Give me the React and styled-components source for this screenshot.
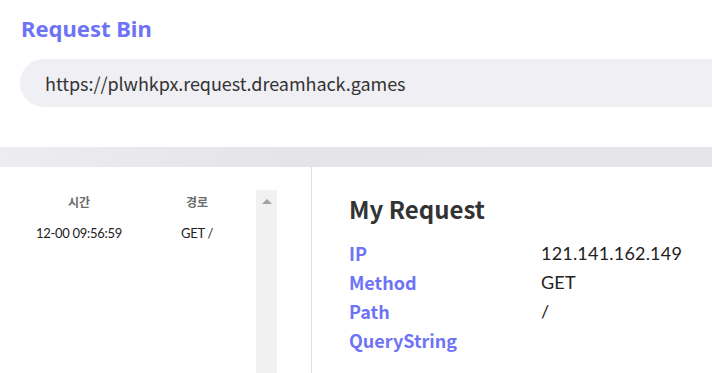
import styled, { createGlobalStyle } from 'styled-components'

const GlobalStyle = createGlobalStyle`
	html, body {
		margin: 0;
		padding: 0;
		background: #fff;
		overflow: hidden;
	}
	body {
		font-family: 'Noto Sans CJK KR', 'Noto Sans', sans-serif;
		color: #333;
	}
`

const requests = [{ time: '12-00 09:56:59', path: 'GET /' }]

const detail = [
	{ label: 'IP', value: '121.141.162.149' },
	{ label: 'Method', value: 'GET' },
	{ label: 'Path', value: '/' },
	{ label: 'QueryString', value: '' },
]

function App() {
	return (
		<>
			<GlobalStyle />
			<Header>
				<Title>Request Bin</Title>
				<UrlBox>https://plwhkpx.request.dreamhack.games</UrlBox>
			</Header>
			<Divider />
			<Main>
				<ListPanel>
					<Table>
						<HeadRow>
							<HeadCell>시간</HeadCell>
							<HeadCell>경로</HeadCell>
						</HeadRow>
						{requests.map((r, i) => (
							<Row key={i}>
								<Cell>{r.time}</Cell>
								<Cell>{r.path}</Cell>
							</Row>
						))}
					</Table>
					<ScrollTrack>
						<ScrollArrow />
					</ScrollTrack>
				</ListPanel>
				<DetailPanel>
					<DetailTitle>My Request</DetailTitle>
					<DetailGrid>
						{detail.map((d) => (
							<DetailRow key={d.label}>
								<Label>{d.label}</Label>
								<Value>{d.value}</Value>
							</DetailRow>
						))}
					</DetailGrid>
				</DetailPanel>
			</Main>
		</>
	)
}

export default App

const Header = styled.div`
	padding: 12px 0 40px 20px;
`
const Title = styled.h1`
	margin: 0 0 0 1px;
	font-family: 'Noto Sans', sans-serif;
	font-size: 22px;
	line-height: 32px;
	font-weight: 700;
	color: #6e73f6;
`
const UrlBox = styled.div`
	margin-top: 15px;
	height: 48px;
	display: flex;
	align-items: center;
	padding-left: 25px;
	border-radius: 24px 0 0 24px;
	background: #efeff4;
	font-size: 18px;
	letter-spacing: -0.05px;
	color: #333;
`
const Divider = styled.div`
	height: 20px;
	background: linear-gradient(to right, #ededf1, #e4e4e9 40%, #e6e6ea);
`
const Main = styled.div`
	display: flex;
	height: 206px;
`
const ListPanel = styled.div`
	width: 312px;
	border-right: 1px solid #dddde3;
	display: flex;
	align-items: flex-start;
	padding: 23px 0 0 20px;
	box-sizing: border-box;
`
const Table = styled.div`
	width: 236px;
	font-family: Lato, 'Noto Sans CJK KR', sans-serif;
`
const HeadRow = styled.div`
	display: grid;
	grid-template-columns: 1fr 1fr;
	height: 22px;
	align-items: center;
`
const HeadCell = styled.div`
	text-align: center;
	font-family: 'Noto Sans CJK KR', sans-serif;
	font-size: 12px;
	font-weight: 700;
	color: #6b6b6b;
`
const Row = styled.div`
	display: grid;
	grid-template-columns: 1fr 1fr;
	height: 22px;
	margin-top: 10px;
	align-items: center;
`
const Cell = styled.div`
	text-align: center;
	font-size: 13px;
	color: #222;
	letter-spacing: -0.3px;
`
const ScrollTrack = styled.div`
	width: 21px;
	align-self: stretch;
	background: #f1f1f1;
	display: flex;
	justify-content: center;
	padding-top: 9px;
	box-sizing: border-box;
`
const ScrollArrow = styled.div`
	width: 0;
	height: 0;
	border-left: 5px solid transparent;
	border-right: 5px solid transparent;
	border-bottom: 5px solid #a3a3a3;
`
const DetailPanel = styled.div`
	padding: 25px 0 0 37px;
`
const DetailTitle = styled.h2`
	margin: 0 0 12px;
	font-size: 24px;
	line-height: 34px;
	font-weight: 700;
	color: #333;
`
const DetailGrid = styled.div`
	display: flex;
	flex-direction: column;
`
const DetailRow = styled.div`
	display: grid;
	grid-template-columns: 192px 1fr;
	height: 29px;
	align-items: center;
`
const Label = styled.div`
	font-size: 18px;
	font-weight: 700;
	color: #6e73f6;
`
const Value = styled.div`
	font-family: Lato, sans-serif;
	font-size: 18px;
	letter-spacing: 0.2px;
	color: #222;
`
